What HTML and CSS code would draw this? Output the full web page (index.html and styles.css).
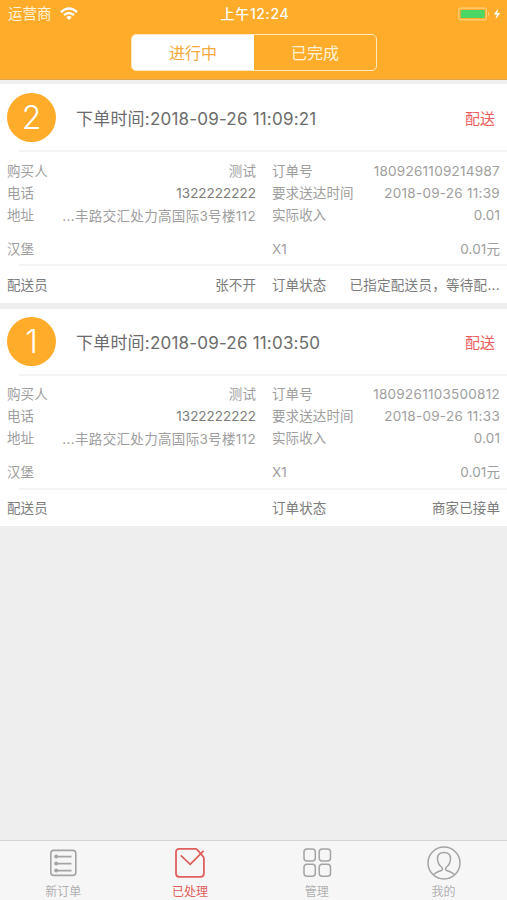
FILE: index.html
```html
<!DOCTYPE html>
<html lang="zh-CN">
<head>
<meta charset="utf-8">
<title>已处理</title>
<link rel="stylesheet" href="styles.css">
</head>
<body>
<div class="app">
  <header class="top">
    <div class="status">
      <div class="carrier"><span>运营商</span>
        <svg class="wifi" width="18" height="14" viewBox="0 0 18 14" fill="none" stroke="#fff" stroke-width="2.3"><path d="M1 5.1Q9-2.1 17 5.1M4 8.2Q9 3.8 14 8.2"/><path d="M6.3 10.2Q9 7.9 11.7 10.2L9 13z" fill="#fff" stroke="none"/></svg>
      </div>
      <div class="clock">上午12:24</div>
      <div class="power">
        <svg width="44" height="14" viewBox="0 0 44 14"><rect x=".8" y="1.2" width="27.6" height="11.6" rx="2" fill="none" stroke="#fdcf80" stroke-width="1.2"/><rect x="2.7" y="3" width="24" height="8" rx=".8" fill="#4bd763"/><path d="M30 4.7q2.6 2.3 0 4.6z" fill="#fdcf80"/><path d="M40.2 1.6L35.8 7.5h2.8l-1.1 4.7 4.8-6.3h-3z" fill="#fff"/></svg>
      </div>
    </div>
    <nav class="segments"><span class="segment on">进行中</span><span class="segment">已完成</span></nav>
  </header>
  <main class="orders">
    <article class="order">
      <div class="head"><span class="num">2</span><h2>下单时间:2018-09-26 11:09:21</h2><a class="action">配送</a></div>
      <div class="body">
        <div class="grid">
          <div class="cell"><span>购买人</span><span>测试</span></div>
          <div class="cell"><span>订单号</span><span class="id">1809261109214987</span></div>
          <div class="cell"><span>电话</span><span class="phone">1322222222</span></div>
          <div class="cell"><span>要求送达时间</span><span class="id">2018-09-26 11:39</span></div>
          <div class="cell"><span>地址</span><span class="addr">...丰路交汇处力高国际3号楼112</span></div>
          <div class="cell"><span>实际收入</span><span>0.01</span></div>
        </div>
        <div class="grid item"><div class="cell"><span>汉堡</span></div><div class="cell"><span>X1</span><span>0.01元</span></div></div>
      </div>
      <div class="grid foot"><div class="cell"><span>配送员</span><span>张不开</span></div><div class="cell"><span>订单状态</span><span class="state">已指定配送员，等待配...</span></div></div>
    </article>
    <article class="order">
      <div class="head"><span class="num">1</span><h2>下单时间:2018-09-26 11:03:50</h2><a class="action">配送</a></div>
      <div class="body">
        <div class="grid">
          <div class="cell"><span>购买人</span><span>测试</span></div>
          <div class="cell"><span>订单号</span><span class="id">1809261103500812</span></div>
          <div class="cell"><span>电话</span><span class="phone">1322222222</span></div>
          <div class="cell"><span>要求送达时间</span><span class="id">2018-09-26 11:33</span></div>
          <div class="cell"><span>地址</span><span class="addr">...丰路交汇处力高国际3号楼112</span></div>
          <div class="cell"><span>实际收入</span><span>0.01</span></div>
        </div>
        <div class="grid item"><div class="cell"><span>汉堡</span></div><div class="cell"><span>X1</span><span>0.01元</span></div></div>
      </div>
      <div class="grid foot"><div class="cell"><span>配送员</span></div><div class="cell"><span>订单状态</span><span>商家已接单</span></div></div>
    </article>
  </main>
  <nav class="tabs">
    <a class="tab"><svg width="34" height="36" viewBox="0 0 34 36" fill="none" stroke="#a4a4a4" stroke-width="1.6"><rect x="4.8" y="7.4" width="25" height="25" rx="3"/><path d="M12 13.600h13.500M12 20.600h13.500M12 27.600h13.500"/><g fill="#a4a4a4" stroke="none"><circle cx="10.2" cy="13.600" r="2"/><circle cx="10.2" cy="20.600" r="2"/><circle cx="10.2" cy="27.600" r="2"/></g></svg><span>新订单</span></a>
    <a class="tab on"><svg width="34" height="36" viewBox="0 0 34 36" fill="none" stroke="#df605c" stroke-width="1.8"><path d="M22.6 5.9H6.3Q3 5.9 3 9.2V30.5Q3 33.8 6.3 33.8H27.6Q30.9 33.8 30.9 30.5V15.5Q30.9 14.3 30 13.3L24.2 6.7Q23.5 5.9 22.6 5.9Z"/><path d="M7.700 12.400L17.200 21.300 30.600 7.800"/></svg><span>已处理</span></a>
    <a class="tab"><svg width="34" height="36" viewBox="0 0 34 36" fill="none" stroke="#a4a4a4" stroke-width="1.5"><rect x="4" y="5.9" width="11.3" height="12" rx="3"/><rect x="19.2" y="5.9" width="11.3" height="12" rx="3"/><rect x="4" y="21.3" width="11.3" height="12" rx="3"/><rect x="19.2" y="21.3" width="11.3" height="12" rx="3"/></svg><span>管理</span></a>
    <a class="tab"><svg width="34" height="36" viewBox="0 0 34 36" fill="none" stroke="#a4a4a4" stroke-width="1.5"><circle cx="17" cy="20" r="16"/><path d="M6.500 32Q8 29.500 14.500 27.500Q16 26.500 15 24.500C11.500 22 10.500 19.500 10.500 15.500Q10.500 9.500 17 9.500T23.500 15.500C23.500 19.500 22.500 22 19 24.500Q18 26.500 19.500 27.500Q26 29.500 27.500 32"/></svg><span>我的</span></a>
  </nav>
</div>
</body>
</html>
```
FILE: styles.css
```css
* { box-sizing: border-box; }
body { margin: 0; font-family: Inter, "Noto Sans CJK SC", sans-serif; background: #eee; }
.app { width: 507px; height: 900px; display: flex; flex-direction: column; }
.top { height: 80px; background: #ffac2a; border-bottom: 1px solid #e0a54a; color: #fff; }
.status { height: 28px; padding: 0 5px 0 8px; display: grid; grid-template-columns: 1fr auto 1fr; align-items: center; font-size: 14px; line-height: 28px; }
.carrier { display: flex; align-items: center; gap: 8px; font-size: 14.5px; color: #fff4dc; }
.clock { font-weight: 500; letter-spacing: .65px; }
.power { display: flex; justify-content: flex-end; }
.segments { display: flex; width: 246px; height: 37px; margin: 6px 0 0 131px; border: 1.5px solid #ffe8c0; border-radius: 5px; overflow: hidden; }
.segment { flex: 1; text-align: center; font-size: 16px; line-height: 36px; color: #fff1d6; }
.segment.on { background: #fff; color: #f4aa3c; }
.orders { flex: 1; padding-top: 4px; display: flex; flex-direction: column; gap: 6px; }
.order { background: #fff; height: 217px; display: flex; flex-direction: column; }
.order:first-child { height: 219px; padding-top: 1px; }
.head { height: 67px; display: flex; align-items: center; padding: 0 12px 0 7px; }
.head, .body { border-bottom: 2px solid transparent; border-image: linear-gradient(90deg, #fff 20px, #f3f3f3 20px) 1; }
.num { width: 49px; height: 49px; border-radius: 50%; background: #ffac2a; color: #fff; font-size: 32px; font-weight: 300; line-height: 49px; text-align: center; }
h2 { margin: 0 0 0 20px; flex: 1; font-size: 17px; font-weight: 400; letter-spacing: .2px; color: #6c6c6c; white-space: nowrap; }
.action { color: #ea5e5e; font-size: 15px; }
.body { height: 114px; padding-top: 8px; }
.order + .order .body { padding-top: 7px; }
.grid { display: grid; grid-template-columns: 249px 228px; column-gap: 16px; padding: 0 7px; grid-auto-rows: 22px; font-size: 13.5px; line-height: 22px; color: #9e9e9e; }
.cell { display: flex; justify-content: space-between; white-space: nowrap; letter-spacing: .1px; }
.phone { color: #7c7c7c; letter-spacing: 0; }
.id { letter-spacing: .27px; }
.addr { letter-spacing: .33px; line-height: 24px; }
.state { letter-spacing: .3px; }
.item { margin-top: 12px; }
.foot { flex: 1; align-content: center; color: #7c7c7c; }
.tabs { height: 60px; border-top: 1px solid #d4d4d4; background: #f6f6f6; display: grid; grid-template-columns: repeat(4, 1fr); }
.tab { display: flex; flex-direction: column; align-items: center; padding-top: 2px; font-size: 12px; line-height: 26px; color: #b0b0b0; }
.tab svg { display: block; height: 36px; flex: none; overflow: visible; }
.tab.on { color: #df605c; }
```
